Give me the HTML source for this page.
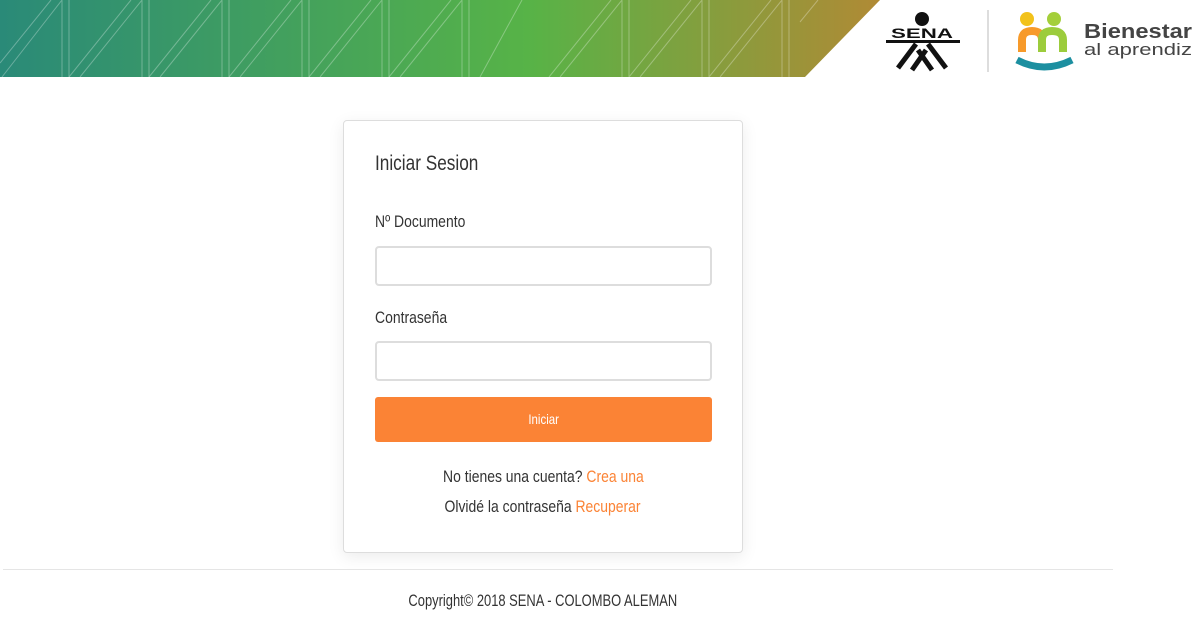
<!DOCTYPE html>
<html><head><meta charset="utf-8"><style>
*{box-sizing:border-box;margin:0;padding:0}
body{width:1203px;height:626px;background:#fff;font-family:"Liberation Sans",sans-serif;color:#333;position:relative;overflow:hidden}
.card{position:absolute;left:343px;top:120px;width:400px;height:433px;border:1px solid #ddd;border-radius:4px;box-shadow:0 4px 16px rgba(0,0,0,.08);background:#fff}
.n{display:inline-block;transform:scaleX(.82);transform-origin:left center;white-space:nowrap}
.c{transform-origin:center center}
.t{position:absolute;left:31px;font-size:21px;color:#333}
.lbl{position:absolute;left:31px;font-size:17px;color:#333}
.in{position:absolute;left:31px;width:337px;height:40px;border:2px solid #ddd;border-radius:4px}
.btn{position:absolute;left:31px;top:276px;width:337px;height:45px;background:#fb8335;border-radius:3px;color:#fff;font-size:14px;text-align:center;line-height:45px}
.lk{position:absolute;left:0;width:398px;text-align:center;font-size:17px;color:#333}
.lk span span{color:#fb8335}
</style></head><body>
<svg width="1203" height="78" style="position:absolute;left:0;top:0">
<defs><linearGradient id="g" x1="0" x2="1"><stop offset="0" stop-color="#2a8a78"/><stop offset=".6" stop-color="#57b347"/><stop offset="1" stop-color="#b08a35"/></linearGradient></defs>
<polygon points="0,0 880,0 805,77 0,77" fill="url(#g)"/>
<g stroke="rgba(255,255,255,.3)" stroke-width="1" fill="none">
<path d="M62,0V77M69,0V77M51,0L0,63M62,0L2,77"/>
<path d="M142,0V77M149,0V77M131,0L69,77M142,0L80,77"/>
<path d="M222,0V77M229,0V77M211,0L149,77M222,0L160,77"/>
<path d="M302,0V77M309,0V77M291,0L229,77M302,0L240,77"/>
<path d="M382,0V77M389,0V77M371,0L309,77M382,0L320,77"/>
<path d="M462,0V77M469,0V77M451,0L389,77M462,0L400,77"/>
<path d="M522,0L480,77M622,0V77M629,0V77M611,0L549,77M622,0L560,77M702,0V77M709,0V77M691,0L629,77M702,0L640,77M782,0V77M789,0V77M771,0L709,77M782,0L720,77M818,0L800,22"/>
</g>
<circle cx="922" cy="19" r="7" fill="#111"/>
<text x="922" y="38" font-family="Liberation Sans" font-weight="bold" font-size="14" text-anchor="middle" fill="#111" textLength="62" lengthAdjust="spacingAndGlyphs">SENA</text>
<rect x="886" y="40" width="74" height="3" fill="#111"/>
<path d="M916,44L898,68M928,44L946,68M918,50L932,70M926,50L912,70" stroke="#111" stroke-width="5"/>
<line x1="988" y1="10" x2="988" y2="72" stroke="#ddd" stroke-width="2"/>
<circle cx="1027" cy="19" r="7" fill="#f2c21b"/><circle cx="1054" cy="19" r="7" fill="#a4cf3a"/>
<path d="M1022,52V40Q1022,31 1032,31Q1042,31 1042,40V52" stroke="#f79a2a" stroke-width="8" fill="none"/>
<path d="M1042,52V40Q1042,31 1052,31Q1063,31 1063,40V52" stroke="#9ccc3c" stroke-width="8" fill="none"/>
<path d="M1017,60Q1044,74 1072,60" stroke="#1c8fa0" stroke-width="7" fill="none"/>
<text x="1084" y="38" font-family="Liberation Sans" font-weight="bold" font-size="20" fill="#444" textLength="108" lengthAdjust="spacingAndGlyphs">Bienestar</text>
<text x="1084" y="55" font-family="Liberation Sans" font-size="17" fill="#444" textLength="108" lengthAdjust="spacingAndGlyphs">al aprendiz</text>
</svg>
<div class="card">
<div class="t" style="top:31px"><span class="n">Iniciar Sesion</span></div>
<div class="lbl" style="top:91px"><span class="n">Nº Documento</span></div>
<div class="in" style="top:125px"></div>
<div class="lbl" style="top:187px"><span class="n">Contraseña</span></div>
<div class="in" style="top:220px"></div>
<div class="btn"><span class="n c">Iniciar</span></div>
<div class="lk" style="top:346px"><span class="n c">No tienes una cuenta? <span>Crea una</span></span></div>
<div class="lk" style="top:376px"><span class="n c">Olvidé la contraseña <span>Recuperar</span></span></div>
</div>
<div style="position:absolute;left:3px;top:569px;width:1110px;height:1px;background:#e5e5e5"></div>
<div style="position:absolute;left:0;width:1086px;top:591px;text-align:center;font-size:17px;color:#333"><span class="n c" style="transform:scaleX(.76)">Copyright© 2018 SENA - COLOMBO ALEMAN</span></div>
</body></html>
